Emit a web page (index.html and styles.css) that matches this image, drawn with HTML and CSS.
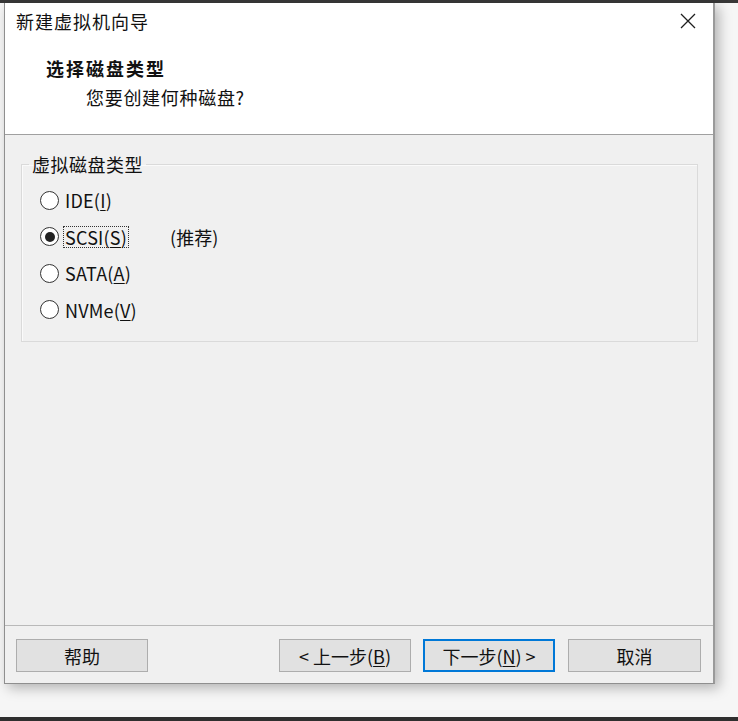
FILE: index.html
```html
<!DOCTYPE html>
<html lang="zh-CN">
<head>
    <meta charset="UTF-8">
    <title>新建虚拟机向导</title>
    <link rel="stylesheet" href="styles.css">
</head>
<body>

<div class="topbar"></div>

<div class="wizard">
    <div class="wizard__header">
        <div class="wizard__titlebar">
            <span class="wizard__title">新建虚拟机向导</span>
            <svg class="wizard__close" width="16" height="16" viewBox="0 0 16 16">
                <path d="M1 1 L15 15 M15 1 L1 15" stroke="#1e1e1e" stroke-width="1.3" fill="none"/>
            </svg>
        </div>
        <h1 class="wizard__heading">选择磁盘类型</h1>
        <p class="wizard__subheading">您要创建何种磁盘?</p>
    </div>

    <div class="wizard__body">
        <fieldset class="group">
            <legend class="group__legend">虚拟磁盘类型</legend>
            <div class="option">
                <span class="option__radio"></span>
                <span class="option__text">IDE(<u>I</u>)</span>
            </div>
            <div class="option">
                <span class="option__radio option__radio--checked"></span>
                <span class="option__text option__text--focus">SCSI(<u>S</u>)</span>
                <span class="option__note">(推荐)</span>
            </div>
            <div class="option">
                <span class="option__radio"></span>
                <span class="option__text">SATA(<u>A</u>)</span>
            </div>
            <div class="option">
                <span class="option__radio"></span>
                <span class="option__text">NVMe(<u>V</u>)</span>
            </div>
        </fieldset>
    </div>

    <div class="wizard__footer">
        <button class="button">帮助</button>
        <div class="wizard__spacer"></div>
        <button class="button">&lt; 上一步(<u>B</u>)</button>
        <button class="button button--default">下一步(<u>N</u>) &gt;</button>
        <button class="button button--cancel">取消</button>
    </div>
</div>

<div class="filler"></div>
<div class="bottombar"></div>

</body>
</html>
```

FILE: styles.css
```css
* {
    box-sizing: border-box;
    margin: 0;
    padding: 0;
}

body {
    background: #f6f6f6;
    font-family: "Noto Sans CJK SC", "Liberation Sans", sans-serif;
    font-size: 18px;
    color: #111;
    height: 721px;
    display: flex;
    flex-direction: column;
    overflow: hidden;
}

.topbar {
    height: 3px;
    background: #383838;
}

.bottombar {
    height: 4px;
    background: #2f2f2f;
}

.filler {
    flex: 1;
}

.wizard {
    width: 711px;
    height: 681px;
    margin-left: 4px;
    border: 1px solid #8f8f8f;
    border-top: 0;
    border-right: 2px solid #9a9a9a;
    background: #f0f0f0;
    box-shadow: 4px 4px 12px rgba(0, 0, 0, 0.28);
    display: flex;
    flex-direction: column;
}

.wizard__header {
    height: 132px;
    background: #fff;
    border-bottom: 1px solid #a0a0a0;
}

.wizard__titlebar {
    height: 36px;
    display: flex;
    align-items: center;
    justify-content: space-between;
    padding: 0 17px 0 11px;
}

.wizard__title {
    line-height: 26px;
    letter-spacing: 1px;
}

.wizard__close {
    display: block;
}

.wizard__heading {
    font-size: 18px;
    font-weight: 700;
    line-height: 26px;
    margin: 16px 0 0 41px;
    letter-spacing: 2px;
}

.wizard__subheading {
    line-height: 26px;
    margin: 3px 0 0 81px;
    letter-spacing: 0.7px;
}

.wizard__body {
    height: 490px;
    padding: 16px 15px 0 16px;
}

.group {
    border: 1px solid #dadada;
    box-shadow: inset 1px 1px 0 #fafafa;
    padding: 5px 0 15px 0;
    height: 191px;
}

.group__legend {
    margin-left: 7px;
    padding: 0 3px;
    line-height: 26px;
    letter-spacing: 0.5px;
}

.option {
    height: 36.5px;
    margin-left: 18px;
    display: flex;
    align-items: center;
}

.option__radio {
    width: 19px;
    height: 19px;
    border: 1px solid #333;
    border-radius: 50%;
    background: #fff;
    display: flex;
    align-items: center;
    justify-content: center;
    flex-shrink: 0;
}

.option__radio--checked::after {
    content: "";
    width: 10px;
    height: 10px;
    border-radius: 50%;
    background: #222;
}

.option__text {
    margin-left: 4px;
    padding: 0 1px;
    line-height: 20px;
    border: 1px dotted transparent;
    letter-spacing: 0.2px;
}

.option__text--focus {
    border-color: #333;
}

.option__note {
    margin-left: 41px;
}

u {
    text-underline-offset: 2px;
}

.wizard__footer {
    flex: 1;
    border-top: 1px solid #b9b9b9;
    display: flex;
    align-items: flex-start;
    padding: 13px 12px 0 11px;
    gap: 12px;
}

.wizard__spacer {
    flex: 1;
}

.button {
    width: 132px;
    height: 33px;
    background: #e1e1e1;
    border: 1px solid #adadad;
    font-family: inherit;
    font-size: 18px;
    color: #111;
    line-height: 20px;
}

.button--default {
    border: 2px solid #0078d7;
}

.button--cancel {
    width: 133px;
    margin-left: 1px;
}
```
